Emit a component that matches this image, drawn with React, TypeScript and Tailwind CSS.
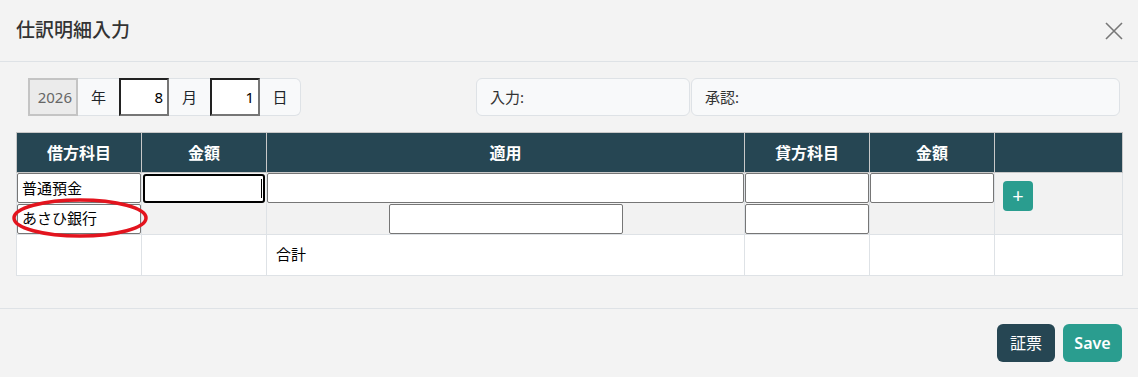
import React from "react";

const font = { fontFamily: '"Noto Sans", "Noto Sans CJK JP", sans-serif' };

const cellBox =
    "block h-[30px] rounded-[2px] border border-[#767676] bg-white px-1 text-[15px] text-black outline-0";

export default function App() {
    return (
        <div
            className="flex h-[377px] w-[1138px] flex-col bg-[#f3f3f3] text-[#212529]"
            style={font}>
            {/* Header */}
            <div className="flex h-[62px] items-center justify-between border-b border-[#dee2e6] px-4">
                <div className="text-[19px] font-medium text-[#333]">仕訳明細入力</div>
                <svg width="18" height="18" viewBox="0 0 18 18" className="mr-[-1px]">
                    <path d="M1 1 L17 17 M17 1 L1 17" stroke="#777" strokeWidth="1.6" />
                </svg>
            </div>

            {/* Body */}
            <div className="flex-1 px-4 pt-4">
                <div className="flex items-center pl-3 pr-[2px]">
                    <div className="flex h-[38px] text-[15px]">
                        <div className="flex w-[50px] items-center justify-end border-2 border-[#c4c4c4] bg-[#ebebeb] pr-1 text-[#666]">
                            2026
                        </div>
                        <div className="flex w-[41px] items-center justify-center border-y border-[#dee2e6] bg-[#f8f9fa]">
                            年
                        </div>
                        <div className="flex w-[50px] items-center justify-end border-2 border-t-[#222] border-l-[#222] border-b-[#767676] border-r-[#767676] bg-white pr-1 text-black">
                            8
                        </div>
                        <div className="flex w-[41px] items-center justify-center border-y border-[#dee2e6] bg-[#f8f9fa]">
                            月
                        </div>
                        <div className="flex w-[50px] items-center justify-end border-2 border-t-[#222] border-l-[#222] border-b-[#767676] border-r-[#767676] bg-white pr-1 text-black">
                            1
                        </div>
                        <div className="flex w-[41px] items-center justify-center rounded-r-md border border-l-0 border-[#dee2e6] bg-[#f8f9fa]">
                            日
                        </div>
                    </div>
                    <div className="flex-1" />
                    <div className="flex h-[38px] w-[214px] items-center rounded-md border border-[#dee2e6] bg-[#f8f9fa] px-[13px] text-[15px] text-[#333]">
                        入力:
                    </div>
                    <div className="ml-[1px] flex h-[38px] w-[429px] items-center rounded-md border border-[#dee2e6] bg-[#f8f9fa] px-[13px] text-[15px] text-[#333]">
                        承認:
                    </div>
                </div>

                {/* Table */}
                <div className="relative mt-4">
                    <table className="w-[1106px] table-fixed border-collapse text-[15px]">
                        <colgroup>
                            <col className="w-[125px]" />
                            <col className="w-[125px]" />
                            <col className="w-[478px]" />
                            <col className="w-[125px]" />
                            <col className="w-[125px]" />
                            <col className="w-[128px]" />
                        </colgroup>
                        <thead>
                            <tr className="h-[40px] bg-[#264653] text-[16px] font-bold text-white">
                                <th className="border border-[#c8c8c8]">借方科目</th>
                                <th className="border border-[#c8c8c8]">金額</th>
                                <th className="border border-[#c8c8c8]">適用</th>
                                <th className="border border-[#c8c8c8]">貸方科目</th>
                                <th className="border border-[#c8c8c8]">金額</th>
                                <th className="border border-[#c8c8c8]"></th>
                            </tr>
                        </thead>
                        <tbody>
                            <tr className="h-[31px] bg-[#f2f2f2]">
                                <td className="border-x border-[#dee2e6] p-0">
                                    <div className={cellBox + " flex w-full items-center"}>普通預金</div>
                                </td>
                                <td className="border-x border-[#dee2e6] p-0">
                                    <div className="relative mx-[1px] h-[29px] rounded-[3px] border-2 border-black bg-white">
                                        <span className="absolute right-[1px] top-[3px] h-[19px] w-px bg-black" />
                                    </div>
                                </td>
                                <td className="border-x border-[#dee2e6] p-0">
                                    <div className={cellBox + " w-full"} />
                                </td>
                                <td className="border-x border-[#dee2e6] p-0">
                                    <div className={cellBox + " w-full"} />
                                </td>
                                <td className="border-x border-[#dee2e6] p-0">
                                    <div className={cellBox + " w-full"} />
                                </td>
                                <td rowSpan={2} className="border-x border-[#dee2e6] p-0 pl-2 pt-2 align-top">
                                    <button className="flex h-[30px] w-[30px] items-center justify-center rounded-[4px] bg-[#2a9d8f] text-[20px] leading-none text-white">
                                        +
                                    </button>
                                </td>
                            </tr>
                            <tr className="h-[30px] bg-[#f2f2f2]">
                                <td className="border-x border-[#dee2e6] p-0">
                                    <div className={cellBox + " flex w-full items-center"}>あさひ銀行</div>
                                </td>
                                <td className="border-x border-[#dee2e6] p-0"></td>
                                <td className="border-x border-[#dee2e6] p-0">
                                    <div className={cellBox + " mx-auto w-[234px]"} />
                                </td>
                                <td className="border-x border-[#dee2e6] p-0">
                                    <div className={cellBox + " w-full"} />
                                </td>
                                <td className="border-x border-[#dee2e6] p-0"></td>
                            </tr>
                            <tr className="h-[41px] bg-white">
                                <td className="border border-[#dee2e6]"></td>
                                <td className="border border-[#dee2e6]"></td>
                                <td className="border border-[#dee2e6] px-[9px] text-black">合計</td>
                                <td className="border border-[#dee2e6]"></td>
                                <td className="border border-[#dee2e6]"></td>
                                <td className="border border-[#dee2e6]"></td>
                            </tr>
                        </tbody>
                    </table>
                    {/* red annotation */}
                    <svg className="pointer-events-none absolute left-[-6px] top-[65px]" width="140" height="44" viewBox="0 0 140 44">
                        <ellipse cx="70" cy="21" rx="66" ry="18" fill="none" stroke="#e3141e" strokeWidth="3.5" />
                    </svg>
                </div>
            </div>

            {/* Footer */}
            <div className="flex h-[69px] items-center justify-end gap-2 border-t border-[#dee2e6] px-4">
                <button className="h-[38px] w-[58px] rounded-md bg-[#264653] text-[16px] text-white">証票</button>
                <button className="h-[38px] w-[59px] rounded-md bg-[#2a9d8f] text-[16px] font-semibold text-white">Save</button>
            </div>
        </div>
    );
}
